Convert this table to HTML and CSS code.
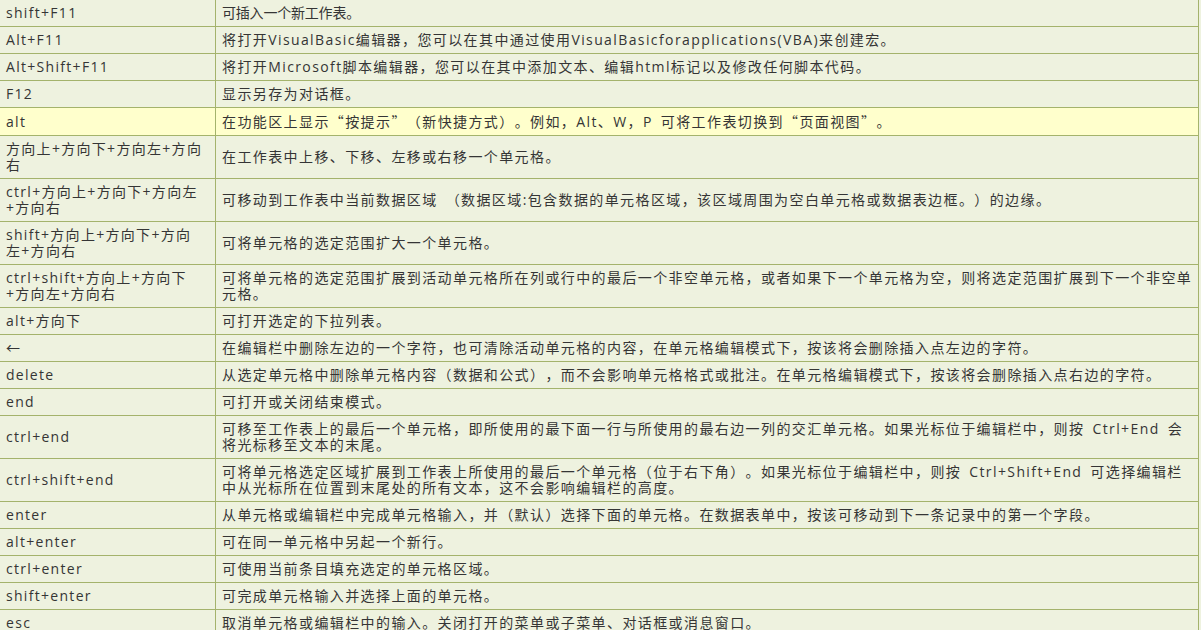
FILE: index.html
```html
<!DOCTYPE html>
<html lang="zh-CN">
<head>
<meta charset="utf-8">
<title>Excel 快捷键</title>
<link rel="stylesheet" href="styles.css">
</head>
<body>
<table class="keys">
<colgroup><col class="col-key"><col class="col-desc"></colgroup>
<tbody>
<tr><td class="k">shift+F11</td><td class="d tight">可插入一个新工作表。</td></tr>
<tr><td class="k">Alt+F11</td><td class="d">将打开VisualBasic编辑器，您可以在其中通过使用VisualBasicforapplications(VBA)来创建宏。</td></tr>
<tr><td class="k">Alt+Shift+F11</td><td class="d">将打开Microsoft脚本编辑器，您可以在其中添加文本、编辑html标记以及修改任何脚本代码。</td></tr>
<tr><td class="k">F12</td><td class="d">显示另存为对话框。</td></tr>
<tr class="hl"><td class="k">alt</td><td class="d">在功能区上显示<span class="q">“</span>按提示<span class="q">”</span>（新快捷方式）。例如，Alt、W，P 可将工作表切换到<span class="q">“</span>页面视图<span class="q">”</span>。</td></tr>
<tr><td class="k">方向上+方向下+方向左+方向右</td><td class="d">在工作表中上移、下移、左移或右移一个单元格。</td></tr>
<tr><td class="k">ctrl+方向上+方向下+方向左+方向右</td><td class="d">可移动到工作表中当前数据区域 （数据区域:包含数据的单元格区域，该区域周围为空白单元格或数据表边框。）的边缘。</td></tr>
<tr><td class="k">shift+方向上+方向下+方向左+方向右</td><td class="d">可将单元格的选定范围扩大一个单元格。</td></tr>
<tr><td class="k">ctrl+shift+方向上+方向下+方向左+方向右</td><td class="d">可将单元格的选定范围扩展到活动单元格所在列或行中的最后一个非空单元格，或者如果下一个单元格为空，则将选定范围扩展到下一个非空单元格。</td></tr>
<tr><td class="k">alt+方向下</td><td class="d">可打开选定的下拉列表。</td></tr>
<tr><td class="k">←</td><td class="d">在编辑栏中删除左边的一个字符，也可清除活动单元格的内容，在单元格编辑模式下，按该将会删除插入点左边的字符。</td></tr>
<tr><td class="k">delete</td><td class="d">从选定单元格中删除单元格内容（数据和公式），而不会影响单元格格式或批注。在单元格编辑模式下，按该将会删除插入点右边的字符。</td></tr>
<tr><td class="k">end</td><td class="d">可打开或关闭结束模式。</td></tr>
<tr><td class="k">ctrl+end</td><td class="d">可移至工作表上的最后一个单元格，即所使用的最下面一行与所使用的最右边一列的交汇单元格。如果光标位于编辑栏中，则按 Ctrl+End 会将光标移至文本的末尾。</td></tr>
<tr><td class="k">ctrl+shift+end</td><td class="d">可将单元格选定区域扩展到工作表上所使用的最后一个单元格（位于右下角）。如果光标位于编辑栏中，则按 Ctrl+Shift+End 可选择编辑栏中从光标所在位置到末尾处的所有文本，这不会影响编辑栏的高度。</td></tr>
<tr><td class="k">enter</td><td class="d">从单元格或编辑栏中完成单元格输入，并（默认）选择下面的单元格。在数据表单中，按该可移动到下一条记录中的第一个字段。</td></tr>
<tr><td class="k">alt+enter</td><td class="d">可在同一单元格中另起一个新行。</td></tr>
<tr><td class="k">ctrl+enter</td><td class="d">可使用当前条目填充选定的单元格区域。</td></tr>
<tr><td class="k">shift+enter</td><td class="d">可完成单元格输入并选择上面的单元格。</td></tr>
<tr><td class="k">esc</td><td class="d">取消单元格或编辑栏中的输入。关闭打开的菜单或子菜单、对话框或消息窗口。</td></tr>
</tbody>
</table>
</body>
</html>
```
FILE: styles.css
```css
html, body {
  margin: 0;
  padding: 0;
  background: #eef2df;
}
body {
  overflow: hidden;
}
.keys {
  border-collapse: collapse;
  table-layout: fixed;
  width: 1200px;
  margin: -1px 0 0 -1px;
  font-family: "Open Sans", "Noto Sans CJK SC", sans-serif;
  font-size: 14px;
  line-height: 16px;
  color: #353535;
  text-spacing-trim: space-all;
}
.col-key {
  width: 216px;
}
.keys td {
  border: 1px solid #a4b36c;
  padding: 5px 6px;
  vertical-align: middle;
  background: #eef2df;
  word-break: break-all;
}
.keys td.k {
  letter-spacing: 1.3px;
  padding-right: 10px;
}
.keys td.d {
  letter-spacing: 1.4px;
  word-spacing: 3px;
  padding-right: 5px;
}
.keys td.d.tight {
  letter-spacing: -0.2px;
}
.keys tr.hl td {
  background: #ffffcc;
}
.q {
  font-family: "Noto Sans CJK SC", sans-serif;
}
```
